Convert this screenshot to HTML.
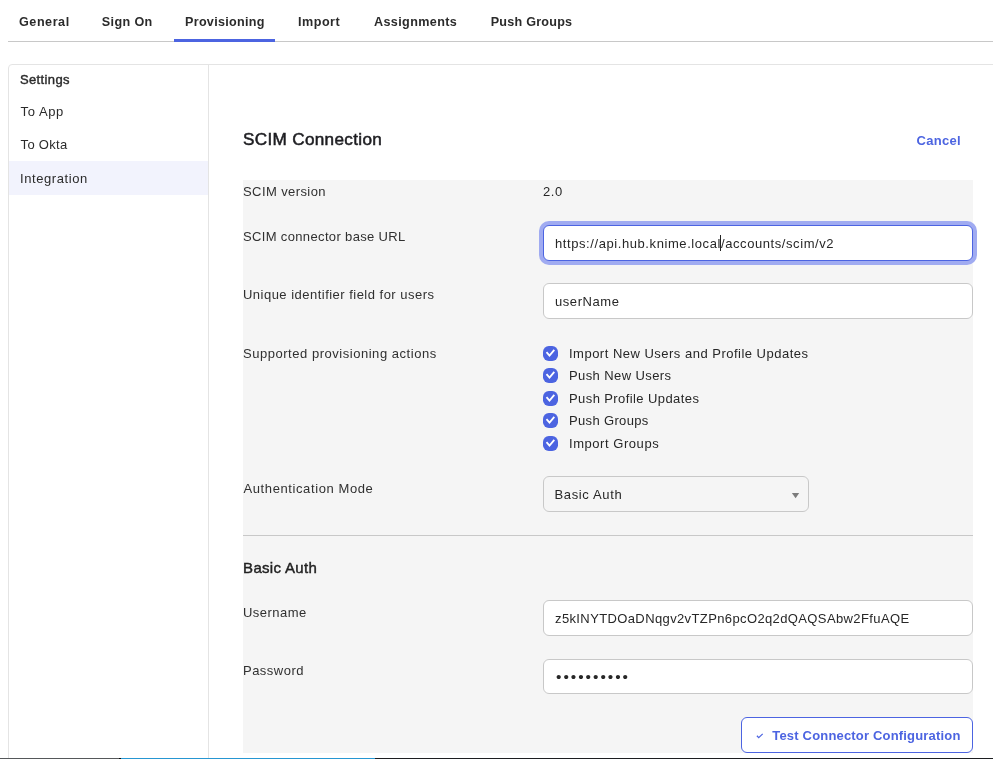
<!DOCTYPE html>
<html lang="en">
<head>
<meta charset="utf-8">
<title>SCIM Connection</title>
<style>
*{box-sizing:border-box;margin:0;padding:0}
html,body{width:993px;height:759px;overflow:hidden;background:#fff}
body{position:relative;font-family:"Liberation Sans",sans-serif;font-size:13px;color:#272727;-webkit-font-smoothing:antialiased}
.t{position:absolute;white-space:nowrap;line-height:16px;height:16px}
.tab{font-weight:700;color:#2b2b2b;font-size:12.6px}
.hr{position:absolute;left:8px;top:41px;width:985px;height:1px;background:#c8c8c8}
.ul{position:absolute;left:174px;top:39px;width:101px;height:3px;background:#4c64e1}
.panel{position:absolute;left:8px;top:64px;width:1000px;height:720px;border:1px solid #e4e4e4;border-radius:4px;background:#fff}
.sep{position:absolute;left:208px;top:65px;width:1px;height:700px;background:#e4e4e4}
.hl{position:absolute;left:9px;top:161px;width:199px;height:34px;background:#f2f3fd}
.side{color:#2b2b2b}
.gray{position:absolute;left:243px;top:180px;width:730px;height:573px;background:#f5f5f5}
.lbl{color:#303030}
.inp{position:absolute;left:543px;width:430px;height:36px;border:1px solid #c8c8c8;border-radius:6px;background:#fff}
.inp.focus{border-color:#4c64e1;box-shadow:0 0 0 4px #a0abf1}
.cb{position:absolute;left:543px;width:15px;height:15px}
.blue{color:#4c64e1;font-weight:700}
.med{font-weight:400;-webkit-text-stroke:0.42px currentColor}
.caret{position:absolute;left:720px;top:235px;width:1px;height:16px;background:#222}
.div{position:absolute;left:243px;top:535px;width:730px;height:1px;background:#c8c8c8}
.sel{position:absolute;left:543px;top:476px;width:266px;height:36px;border:1px solid #c8c8c8;border-radius:6px;background:#f5f5f5}
.btn{position:absolute;left:741px;top:717px;width:232px;height:36px;border:1px solid #4c64e1;border-radius:6px;background:#fff}
.bottom{position:absolute;left:0;top:758px;width:993px;height:1px;background:linear-gradient(to right,#55585a 0,#55585a 119px,#0a0a0a 119px,#0a0a0a 121px,#2696d2 121px,#2696d2 375px,#1c1e21 375px)}
</style>
</head>
<body>
<div id="layer" style="position:absolute;left:0;top:0;width:993px;height:759px;will-change:transform">
<!-- tabs -->
<div class="t tab" id="tab1" style="left:19px;top:14px;letter-spacing:0.54px;">General</div>
<div class="t tab" id="tab2" style="left:101.8px;top:14px;letter-spacing:0.37px;">Sign On</div>
<div class="t tab" id="tab3" style="left:185px;top:14px;letter-spacing:0.29px;">Provisioning</div>
<div class="t tab" id="tab4" style="left:298px;top:14px;letter-spacing:0.5px;">Import</div>
<div class="t tab" id="tab5" style="left:374px;top:14px;letter-spacing:0.37px;">Assignments</div>
<div class="t tab" id="tab6" style="left:490.7px;top:14px;letter-spacing:0.23px;">Push Groups</div>
<div class="hr"></div>
<div class="ul"></div>

<div class="panel"></div>
<div class="sep"></div>
<div class="hl"></div>
<div class="t side med" id="s1" style="left:20px;top:72px;letter-spacing:0.36px;">Settings</div>
<div class="t side" id="s2" style="left:20.6px;top:104px;letter-spacing:0.6px;">To App</div>
<div class="t side" id="s3" style="left:20.6px;top:137px;letter-spacing:0.31px;">To Okta</div>
<div class="t side" id="s4" style="left:20px;top:171px;letter-spacing:0.58px;">Integration</div>

<div class="t med" id="title" style="left:243px;top:130px;letter-spacing:0.31px;font-size:16px;line-height:20px;height:20px;color:#1d1d21;-webkit-text-stroke-width:0.5px;transform:scaleX(1.07);transform-origin:0 0">SCIM Connection</div>
<div class="t blue" id="cancel" style="left:916.5px;top:133px;letter-spacing:0.31px;">Cancel</div>

<div class="gray"></div>

<div class="t lbl" id="l1" style="left:243px;top:184px;letter-spacing:0.41px;">SCIM version</div>
<div class="t" id="v1" style="left:543px;top:184px;letter-spacing:0.6px;">2.0</div>

<div class="t lbl" id="l2" style="left:243px;top:229px;letter-spacing:0.35px;">SCIM connector base URL</div>
<div class="inp focus" style="top:225px"></div>
<div class="t" id="v2" style="left:555px;top:236px;letter-spacing:0.58px;">https://api.hub.knime.local/accounts/scim/v2</div>
<div class="caret"></div>

<div class="t lbl" id="l3" style="left:243px;top:287px;letter-spacing:0.48px;">Unique identifier field for users</div>
<div class="inp" style="top:283px"></div>
<div class="t" id="v3" style="left:555px;top:294px;letter-spacing:0.57px;">userName</div>

<div class="t lbl" id="l4" style="left:243px;top:346px;letter-spacing:0.53px;">Supported provisioning actions</div>

<svg class="cb" style="top:346px" viewBox="0 0 15 15"><rect width="15" height="15" rx="5.8" fill="#4c64e1"/><path d="M3.5 6.2 L6.5 9.6 L11.3 3.9" fill="none" stroke="#fff" stroke-width="1.8"/></svg>
<svg class="cb" style="top:368px" viewBox="0 0 15 15"><rect width="15" height="15" rx="5.8" fill="#4c64e1"/><path d="M3.5 6.2 L6.5 9.6 L11.3 3.9" fill="none" stroke="#fff" stroke-width="1.8"/></svg>
<svg class="cb" style="top:391px" viewBox="0 0 15 15"><rect width="15" height="15" rx="5.8" fill="#4c64e1"/><path d="M3.5 6.2 L6.5 9.6 L11.3 3.9" fill="none" stroke="#fff" stroke-width="1.8"/></svg>
<svg class="cb" style="top:413px" viewBox="0 0 15 15"><rect width="15" height="15" rx="5.8" fill="#4c64e1"/><path d="M3.5 6.2 L6.5 9.6 L11.3 3.9" fill="none" stroke="#fff" stroke-width="1.8"/></svg>
<svg class="cb" style="top:436px" viewBox="0 0 15 15"><rect width="15" height="15" rx="5.8" fill="#4c64e1"/><path d="M3.5 6.2 L6.5 9.6 L11.3 3.9" fill="none" stroke="#fff" stroke-width="1.8"/></svg>

<div class="t" id="c1" style="left:569px;top:346px;letter-spacing:0.49px;">Import New Users and Profile Updates</div>
<div class="t" id="c2" style="left:569px;top:368px;letter-spacing:0.4px;">Push New Users</div>
<div class="t" id="c3" style="left:569px;top:391px;letter-spacing:0.41px;">Push Profile Updates</div>
<div class="t" id="c4" style="left:569px;top:413px;letter-spacing:0.34px;">Push Groups</div>
<div class="t" id="c5" style="left:569px;top:436px;letter-spacing:0.55px;">Import Groups</div>

<div class="t lbl" id="l5" style="left:243.5px;top:481px;letter-spacing:0.6px;">Authentication Mode</div>
<div class="sel"></div>
<div class="t" id="v5" style="left:554.5px;top:487px;letter-spacing:0.64px;">Basic Auth</div>
<svg style="position:absolute;left:790px;top:490px;width:12px;height:12px" viewBox="0 0 12 12"><path d="M1.9 3 L9.2 3 L5.55 8.2 Z" fill="#7c7c7c"/></svg>

<div class="div"></div>
<div class="t med" id="h2" style="left:243.1px;top:558.6px;letter-spacing:0.31px;font-size:15px;line-height:18px;height:18px;color:#222">Basic Auth</div>

<div class="t lbl" id="l6" style="left:243px;top:605px;letter-spacing:0.48px;">Username</div>
<div class="inp" style="top:600px"></div>
<div class="t" id="v6" style="left:555px;top:611px;letter-spacing:0.38px;">z5kINYTDOaDNqgv2vTZPn6pcO2q2dQAQSAbw2FfuAQE</div>

<div class="t lbl" id="l7" style="left:243px;top:663px;letter-spacing:0.48px;">Password</div>
<div class="inp" style="top:659px;height:35px"></div>
<div class="t" id="v7" style="left:556px;top:669px;letter-spacing:1.97px;font-size:15.5px;line-height:16px;height:16px">••••••••••</div>

<div class="btn"></div>
<svg style="position:absolute;left:755px;top:731px;width:10px;height:10px" viewBox="0 0 10 10"><path d="M1.9 4.8 L3.7 6.6 L7.7 2.9" fill="none" stroke="#4c64e1" stroke-width="1.25"/></svg>
<div class="t blue" id="btnt" style="left:772.3px;top:728px;letter-spacing:0.18px;">Test Connector Configuration</div>

<div class="bottom"></div>
</div>
</body>
</html>
